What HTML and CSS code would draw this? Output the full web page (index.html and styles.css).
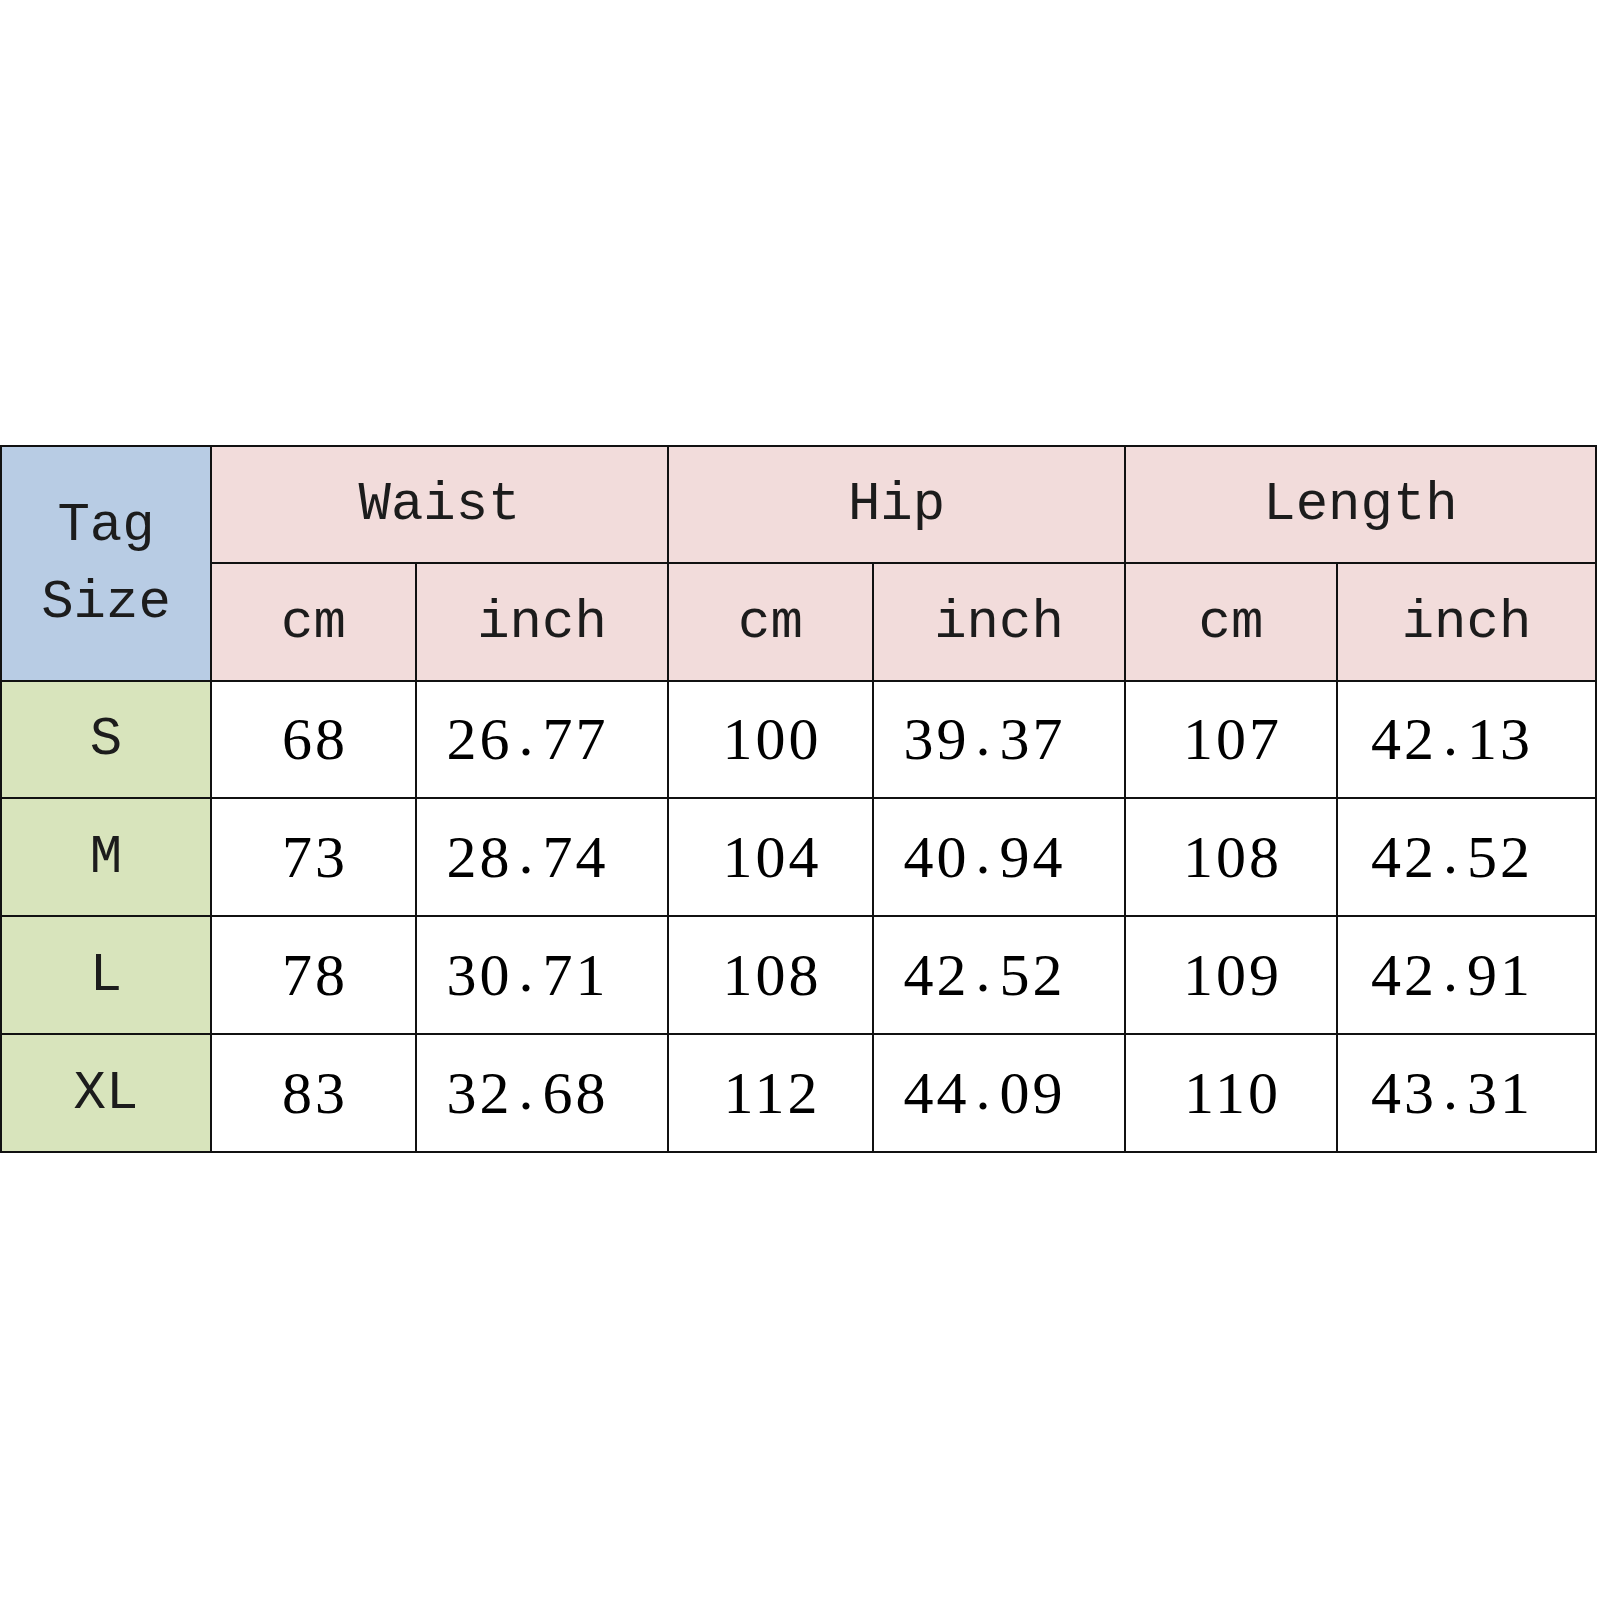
FILE: index.html
```html
<!DOCTYPE html>
<html lang="en">
<head>
<meta charset="utf-8">
<title>Size Chart</title>
<link rel="stylesheet" href="styles.css">
</head>
<body>
<div class="page">
  <div class="chart">
    <div class="cell tag">Tag<br>Size</div>
    <div class="cell head span2">Waist</div>
    <div class="cell head span2">Hip</div>
    <div class="cell head span2">Length</div>
    <div class="cell head">cm</div>
    <div class="cell head">inch</div>
    <div class="cell head">cm</div>
    <div class="cell head">inch</div>
    <div class="cell head">cm</div>
    <div class="cell head">inch</div>

    <div class="cell size">S</div>
    <div class="cell num">68</div>
    <div class="cell num in">26<span class="dot">.</span>77</div>
    <div class="cell num">100</div>
    <div class="cell num in">39<span class="dot">.</span>37</div>
    <div class="cell num">107</div>
    <div class="cell num in">42<span class="dot">.</span>13</div>

    <div class="cell size">M</div>
    <div class="cell num">73</div>
    <div class="cell num in">28<span class="dot">.</span>74</div>
    <div class="cell num">104</div>
    <div class="cell num in">40<span class="dot">.</span>94</div>
    <div class="cell num">108</div>
    <div class="cell num in">42<span class="dot">.</span>52</div>

    <div class="cell size">L</div>
    <div class="cell num">78</div>
    <div class="cell num in">30<span class="dot">.</span>71</div>
    <div class="cell num">108</div>
    <div class="cell num in">42<span class="dot">.</span>52</div>
    <div class="cell num">109</div>
    <div class="cell num in">42<span class="dot">.</span>91</div>

    <div class="cell size">XL</div>
    <div class="cell num">83</div>
    <div class="cell num in">32<span class="dot">.</span>68</div>
    <div class="cell num">112</div>
    <div class="cell num in">44<span class="dot">.</span>09</div>
    <div class="cell num">110</div>
    <div class="cell num in">43<span class="dot">.</span>31</div>
  </div>
</div>
</body>
</html>
```

FILE: styles.css
```css
html, body {
  margin: 0;
  padding: 0;
  background: #ffffff;
}

.page {
  width: 1600px;
  height: 1600px;
  padding-top: 445px;
  box-sizing: border-box;
}

.chart {
  width: 1597px;
  display: grid;
  grid-template-columns: 208px 203px 250px 203px 250px 210px 257px;
  grid-template-rows: 115px 116px 115px 116px 116px 116px;
  gap: 2px;
  padding: 2px;
  box-sizing: border-box;
  background: #111111;
}

.cell {
  display: flex;
  align-items: center;
  justify-content: center;
  text-align: center;
  color: #1c1c1c;
}

.tag {
  grid-row: span 2;
  background: #b8cce4;
  font-family: "Liberation Mono", "Courier New", monospace;
  font-size: 54px;
  line-height: 77px;
}

.head {
  background: #f2dcdb;
  font-family: "Liberation Mono", "Courier New", monospace;
  font-size: 54px;
}

.span2 {
  grid-column: span 2;
}

.size {
  background: #d8e4bc;
  font-family: "Liberation Mono", "Courier New", monospace;
  font-size: 54px;
}

.num {
  background: #ffffff;
  color: #000000;
  font-family: "Liberation Serif", "Times New Roman", serif;
  font-size: 60px;
  letter-spacing: 3px;
  padding-left: 3px;
}

.num.in {
  padding-right: 32px;
}

.dot {
  display: inline-block;
  width: 30px;
  text-align: center;
  position: relative;
  top: -4px;
}
```
